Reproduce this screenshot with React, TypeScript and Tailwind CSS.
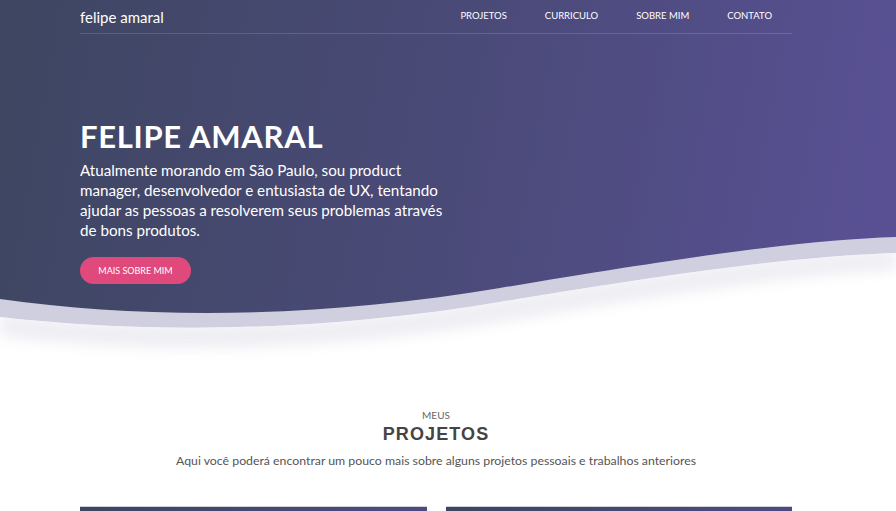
const NAV_ITEMS = ["Projetos", "Curriculo", "Sobre mim", "Contato"];

const Wave = () => (
  <svg
    className="absolute left-0 bottom-0 w-full h-[130px]"
    viewBox="0 0 896 130"
    preserveAspectRatio="none"
  >
    <defs>
      <filter id="soft" x="-10%" y="-100%" width="120%" height="300%">
        <feGaussianBlur stdDeviation="7" />
      </filter>
      <clipPath id="below">
        <path d="M0,87 C150,104 320,102 500,72 C680,42 800,26 896,23 L896,130 L0,130 Z" />
      </clipPath>
    </defs>
    {/* lavender band under the hero */}
    <path
      d="M0,69 C150,90 320,88 500,58 C680,28 800,10 896,7 L896,130 L0,130 Z"
      fill="#d0cfdf"
    />
    <path
      d="M0,87 C150,104 320,102 500,72 C680,42 800,26 896,23 L896,130 L0,130 Z"
      fill="#ffffff"
    />
    {/* faint shadow under the band */}
    <g clipPath="url(#below)">
      <path
        d="M0,84 C150,101 320,99 500,69 C680,39 800,23 896,20 L896,40 C800,44 680,62 500,92 C320,122 150,124 0,106 Z"
        fill="#e6e6ee"
        opacity="0.7"
        filter="url(#soft)"
      />
    </g>
  </svg>
);

export default function App() {
  return (
    <div className="w-full min-h-[511px] bg-white overflow-hidden font-['Lato',sans-serif]">
      <section className="relative h-[360px] bg-[linear-gradient(100deg,#3e4661_0%,#4a4a78_50%,#5a5196_100%)]">
        <header className="ml-[80px] w-[712px] h-[34px] flex items-center justify-between border-b border-white/15">
          <span className="text-white text-[15px] leading-none pt-[1px]">felipe amaral</span>
          <nav className="flex pr-[1px]">
            {NAV_ITEMS.map((item) => (
              <a
                key={item}
                className="px-[19px] text-white text-[9.5px] uppercase"
              >
                {item}
              </a>
            ))}
          </nav>
        </header>

        <div className="relative z-10 ml-[80px] w-[712px] pt-[83px]">
          <h1 className="text-white text-[31px] font-bold tracking-[0.7px] leading-[38px]">
            FELIPE AMARAL
          </h1>
          <p className="mt-[5px] w-[372px] text-white text-[15.2px] leading-[20px]">
            Atualmente morando em São Paulo, sou product manager, desenvolvedor e
            entusiasta de UX, tentando ajudar as pessoas a resolverem seus
            problemas através de bons produtos.
          </p>
          <button className="mt-[17px] h-[27px] w-[111px] rounded-full bg-[#e0497b] text-white text-[9px] uppercase">
            Mais sobre mim
          </button>
        </div>

        <Wave />
      </section>

      <section className="ml-[80px] w-[712px] flex flex-col items-center pt-[50px]">
        <span className="text-[10px] leading-none text-[#666] uppercase">Meus</span>
        <h2 className="mt-[5px] text-[18px] leading-none font-bold tracking-[1.1px] text-[#444] font-['Liberation_Sans',sans-serif]">
          PROJETOS
        </h2>
        <p className="mt-[9px] text-[12.3px] text-[#555]">
          Aqui você poderá encontrar um pouco mais sobre alguns projetos pessoais e
          trabalhos anteriores
        </p>
        <div className="mt-[36px] w-full grid grid-cols-2 gap-[19px]">
          <div className="h-[60px] border-t border-[#cfd0d8] bg-[linear-gradient(90deg,#3c4660,#4f4a80)]" />
          <div className="h-[60px] border-t border-[#cfd0d8] bg-[linear-gradient(90deg,#3c4660,#4f4a80)]" />
        </div>
      </section>
    </div>
  );
}
